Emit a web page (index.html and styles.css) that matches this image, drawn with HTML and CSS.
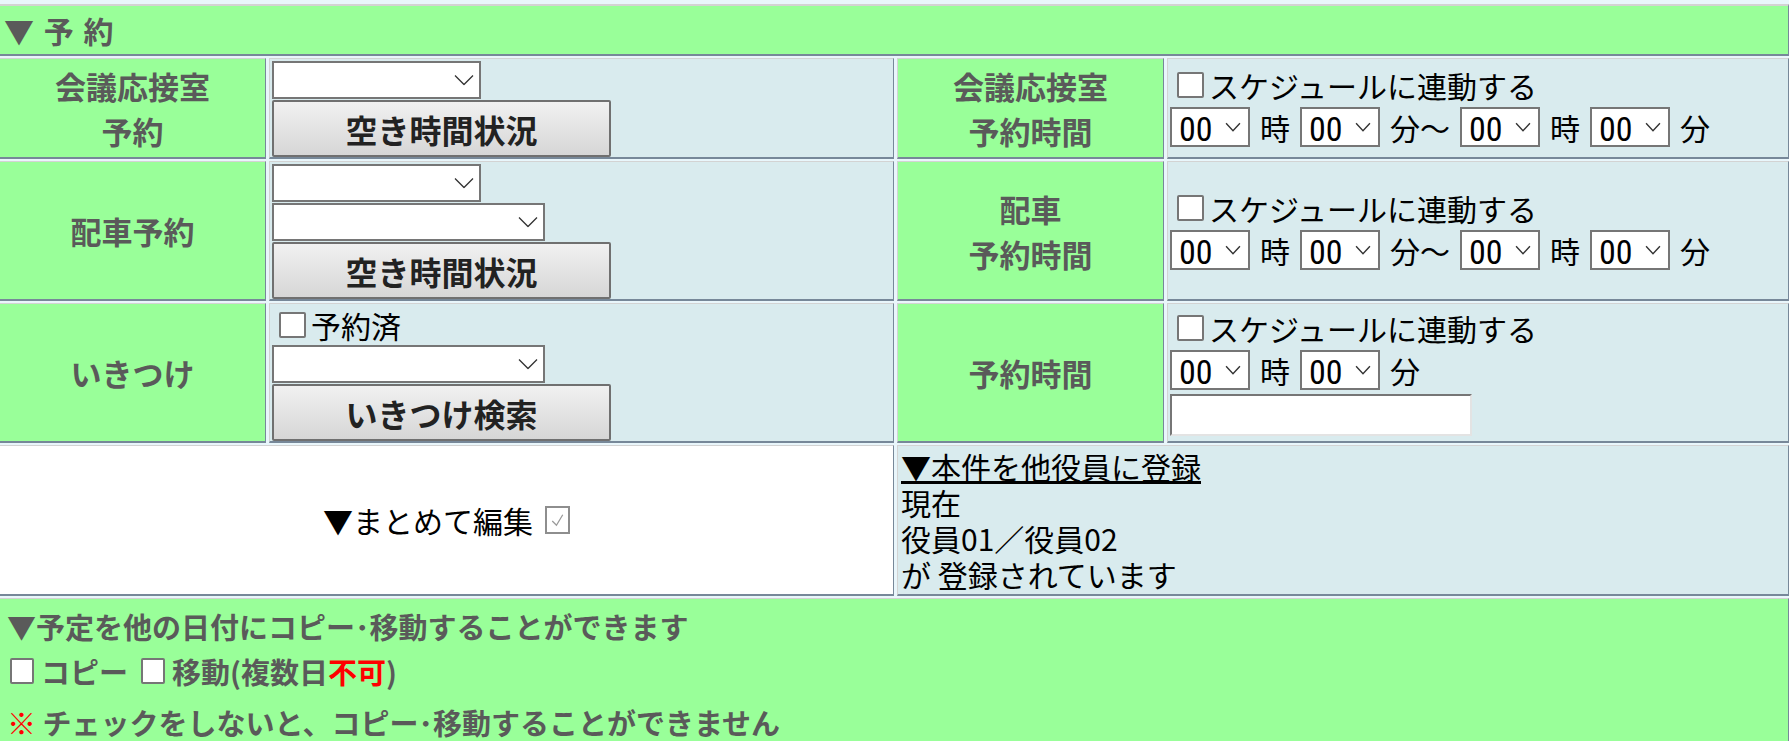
FILE: index.html
```html
<!DOCTYPE html>
<html lang="ja">

<head>
    <meta charset="UTF-8">
    <meta name="viewport" content="width=device-width, initial-scale=1.0">
    <title>予約</title>
    <link rel="stylesheet" href="styles.css">
</head>

<body>
    <div class="sheet">
        <div class="cell head first">▼ 予 約</div>

        <!-- 会議応接室 -->
        <div class="cell label first">会議応接室<br>予約</div>
        <div class="cell value stack">
            <span class="sel sel-big">
                <select></select>
                <svg class="chev chev-big" viewBox="0 0 20 11"><path d="M1 1 L10 10 L19 1" /></svg>
            </span>
            <button class="btn" type="button">空き時間状況</button>
        </div>
        <div class="cell label">会議応接室<br>予約時間</div>
        <div class="cell value times">
            <label class="chk-line"><input type="checkbox" class="chk">スケジュールに連動する</label>
            <div class="time-row">
                <span class="sel sel-time"><select><option>00</option></select><svg class="chev chev-small" viewBox="0 0 15 9"><path d="M1 1 L7.5 8 L14 1" /></svg></span>
                <span>時</span>
                <span class="sel sel-time"><select><option>00</option></select><svg class="chev chev-small" viewBox="0 0 15 9"><path d="M1 1 L7.5 8 L14 1" /></svg></span>
                <span>分〜</span>
                <span class="sel sel-time"><select><option>00</option></select><svg class="chev chev-small" viewBox="0 0 15 9"><path d="M1 1 L7.5 8 L14 1" /></svg></span>
                <span>時</span>
                <span class="sel sel-time"><select><option>00</option></select><svg class="chev chev-small" viewBox="0 0 15 9"><path d="M1 1 L7.5 8 L14 1" /></svg></span>
                <span>分</span>
            </div>
        </div>

        <!-- 配車 -->
        <div class="cell label first">配車予約</div>
        <div class="cell value stack">
            <span class="sel sel-big">
                <select></select>
                <svg class="chev chev-big" viewBox="0 0 20 11"><path d="M1 1 L10 10 L19 1" /></svg>
            </span>
            <span class="sel sel-wide">
                <select></select>
                <svg class="chev chev-big" viewBox="0 0 20 11"><path d="M1 1 L10 10 L19 1" /></svg>
            </span>
            <button class="btn" type="button">空き時間状況</button>
        </div>
        <div class="cell label">配車<br>予約時間</div>
        <div class="cell value times">
            <label class="chk-line"><input type="checkbox" class="chk">スケジュールに連動する</label>
            <div class="time-row">
                <span class="sel sel-time"><select><option>00</option></select><svg class="chev chev-small" viewBox="0 0 15 9"><path d="M1 1 L7.5 8 L14 1" /></svg></span>
                <span>時</span>
                <span class="sel sel-time"><select><option>00</option></select><svg class="chev chev-small" viewBox="0 0 15 9"><path d="M1 1 L7.5 8 L14 1" /></svg></span>
                <span>分〜</span>
                <span class="sel sel-time"><select><option>00</option></select><svg class="chev chev-small" viewBox="0 0 15 9"><path d="M1 1 L7.5 8 L14 1" /></svg></span>
                <span>時</span>
                <span class="sel sel-time"><select><option>00</option></select><svg class="chev chev-small" viewBox="0 0 15 9"><path d="M1 1 L7.5 8 L14 1" /></svg></span>
                <span>分</span>
            </div>
        </div>

        <!-- いきつけ -->
        <div class="cell label first">いきつけ</div>
        <div class="cell value stack">
            <label class="chk-line chk-line-tall"><input type="checkbox" class="chk">予約済</label>
            <span class="sel sel-wide">
                <select></select>
                <svg class="chev chev-big" viewBox="0 0 20 11"><path d="M1 1 L10 10 L19 1" /></svg>
            </span>
            <button class="btn" type="button">いきつけ検索</button>
        </div>
        <div class="cell label">予約時間</div>
        <div class="cell value times">
            <label class="chk-line"><input type="checkbox" class="chk">スケジュールに連動する</label>
            <div class="time-row">
                <span class="sel sel-time"><select><option>00</option></select><svg class="chev chev-small" viewBox="0 0 15 9"><path d="M1 1 L7.5 8 L14 1" /></svg></span>
                <span>時</span>
                <span class="sel sel-time"><select><option>00</option></select><svg class="chev chev-small" viewBox="0 0 15 9"><path d="M1 1 L7.5 8 L14 1" /></svg></span>
                <span>分</span>
            </div>
            <input type="text" class="txt">
        </div>

        <!-- まとめて編集 / 他役員 -->
        <div class="cell edit first">
            ▼まとめて編集
            <span class="done-box"><svg viewBox="0 0 20 22"><polyline points="5,12 9,16 15,6" /></svg></span>
        </div>
        <div class="cell others">
            <div class="link">▼本件を他役員に登録</div>
            <div>現在</div>
            <div>役員01／役員02</div>
            <div>が 登録されています</div>
        </div>

        <!-- コピー・移動 -->
        <div class="cell notice first">
            <p class="notice-title">▼予定を他の日付にコピー･移動することができます</p>
            <p class="notice-opts">
                <label><input type="checkbox" class="chk chk-flat">コピー</label>
                <label><input type="checkbox" class="chk chk-flat">移動(複数日<span class="red">不可</span>)</label>
            </p>
            <p class="notice-warn"><span class="red">※</span> チェックをしないと、コピー･移動することができません</p>
        </div>
    </div>
</body>

</html>
```

FILE: styles.css
```css
* {
    box-sizing: border-box;
}

body {
    margin: 0;
    padding-top: 4px;
    background: #e9f6fb;
    font-family: "Noto Sans CJK JP", "Noto Sans", sans-serif;
    font-size: 30px;
    color: #000;
}

.sheet {
    display: grid;
    grid-template-columns: 266px 625px 267px 1fr;
    column-gap: 3px;
    row-gap: 2px;
}

.cell {
    border-top: 1px solid #d3d3d3;
    border-left: 1px solid #d3d3d3;
    border-right: 1px solid #778899;
    border-bottom: 2px solid #778899;
}

.first {
    border-left: 0;
}

.head {
    grid-column: 1 / -1;
    border-top-width: 2px;
    height: 52px;
    padding-left: 4px;
    line-height: 48px;
    word-spacing: 3px;
    background: #99ff99;
    color: #5a5a5a;
    font-weight: bold;
}

.label {
    display: flex;
    align-items: center;
    justify-content: center;
    text-align: center;
    background: #99ff99;
    color: #5a5a5a;
    font-weight: bold;
    font-size: 31px;
    line-height: 45px;
}

.value {
    background: #d9ebee;
    padding: 2px 2px 0;
}

.stack {
    display: flex;
    flex-direction: column;
    align-items: flex-start;
    gap: 1px;
}

.times {
    display: flex;
    flex-direction: column;
    justify-content: center;
    gap: 2px;
    padding-bottom: 2px;
}

/* selects */
.sel {
    position: relative;
    display: inline-block;
}

.sel select {
    appearance: none;
    display: block;
    width: 100%;
    height: 100%;
    margin: 0;
    padding: 0 0 0 7px;
    border: 2px solid #767676;
    border-radius: 0;
    background: #fff;
    font-family: "Liberation Sans Narrow", "Roboto Condensed", Roboto, sans-serif;
    font-size: 34px;
    color: #000;
}

.sel-big {
    width: 209px;
    height: 38px;
}

.sel-wide {
    width: 273px;
    height: 38px;
}

.sel-time {
    width: 80px;
    height: 40px;
}

.chev {
    position: absolute;
    top: 50%;
    transform: translateY(-50%);
    pointer-events: none;
    fill: none;
    stroke: #333;
    stroke-width: 1.3;
}

.chev-big {
    right: 7px;
    width: 20px;
    height: 11px;
}

.chev-small {
    right: 9px;
    width: 16px;
    height: 10px;
}

.btn {
    width: 339px;
    height: 57px;
    padding: 0;
    border: 2px solid #707070;
    border-radius: 2px;
    background: linear-gradient(#f1f1f1, #d6d6d6);
    font-family: inherit;
    font-size: 32px;
    font-weight: bold;
    color: #222;
}

/* checkboxes */
.chk {
    appearance: none;
    width: 27px;
    height: 26px;
    margin: 0 5px 0 7px;
    border: 2px solid #767676;
    border-radius: 2px;
    background: #fff;
    flex: none;
}

.chk-line {
    display: flex;
    align-items: center;
    height: 36px;
}

.chk-line-tall {
    height: 38px;
}

.time-row {
    display: flex;
    align-items: center;
    gap: 10px;
}

.txt {
    width: 302px;
    height: 42px;
    border: 2px solid;
    border-color: #767676 #e3e3e3 #e3e3e3 #767676;
    background: #fff;
    font: inherit;
}

/* row 4 */
.edit {
    grid-column: 1 / 3;
    display: flex;
    align-items: center;
    justify-content: center;
    gap: 12px;
    background: #fff;
}

.done-box {
    display: inline-block;
    width: 25px;
    height: 28px;
    border: 2px solid #8e8e8e;
    background: #fff;
}

.done-box svg {
    display: block;
    width: 100%;
    height: 100%;
    fill: none;
    stroke: #9a9a9a;
    stroke-width: 1.2;
}

.others {
    grid-column: 3 / 5;
    padding: 2px 3px;
    background: #d9ebee;
    line-height: 36px;
}

.link {
    text-decoration: underline;
}

/* copy / move */
.notice {
    grid-column: 1 / -1;
    border-bottom: 0;
    padding: 4px 7px 0;
    background: #99ff99;
    color: #5a5a5a;
    font-weight: bold;
    font-size: 29px;
}

.notice p {
    margin: 0;
    line-height: 46px;
}

.notice-opts {
    display: flex;
    align-items: center;
    height: 44px;
}

.notice-opts label {
    display: flex;
    align-items: center;
    margin-right: 10px;
}

.chk-flat {
    width: 24px;
    height: 26px;
    margin: 0 7px 0 3px;
}

.notice-warn {
    margin-top: 6px !important;
}

.red {
    color: #ff0000;
}
```
